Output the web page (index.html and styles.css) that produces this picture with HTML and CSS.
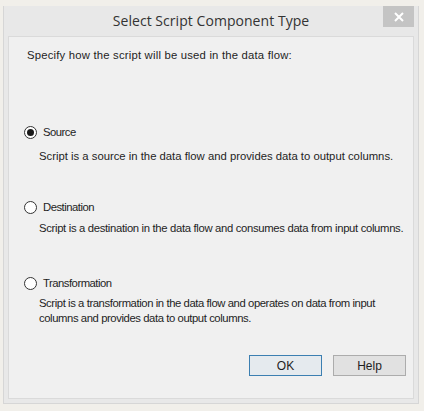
FILE: index.html
```html
<!DOCTYPE html>
<html>
<head>
<meta charset="utf-8">
<link rel="stylesheet" href="styles.css">
</head>
<body>
<div class="window">
  <div class="titlebar">
    <div class="title">Select Script Component Type</div>
    <div class="close"><svg width="10" height="10" viewBox="0 0 10 10"><path d="M1 1 L9 9 M9 1 L1 9" stroke="#fff" stroke-width="2"/></svg></div>
  </div>
  <div class="client">
    <div class="intro">Specify how the script will be used in the data flow:</div>
    <div class="option opt-source">
      <div class="radio-row"><span class="radio checked"></span><span class="label">Source</span></div>
      <div class="desc">Script is a source in the data flow and provides data to output columns.</div>
    </div>
    <div class="option opt-dest">
      <div class="radio-row"><span class="radio"></span><span class="label">Destination</span></div>
      <div class="desc">Script is a destination in the data flow and consumes data from input columns.</div>
    </div>
    <div class="option opt-trans">
      <div class="radio-row"><span class="radio"></span><span class="label">Transformation</span></div>
      <div class="desc">Script is a transformation in the data flow and operates on data from input<br>columns and provides data to output columns.</div>
    </div>
    <div class="buttons">
      <div class="btn btn-default">OK</div>
      <div class="btn">Help</div>
    </div>
  </div>
</div>
</body>
</html>
```
FILE: styles.css
```css
html, body {
  margin: 0;
  padding: 0;
}
body {
  background: #f1efea;
  width: 424px;
  height: 411px;
  overflow: hidden;
  font-family: "Liberation Sans", Arial, sans-serif;
  color: #1e1e1e;
}
.window {
  margin: 6px 0 0 3px;
  width: 416px;
  height: 398px;
  box-sizing: border-box;
  background: #e8e8e8;
  border: 1px solid #d6d6d6;
  border-top: none;
  display: flex;
  flex-direction: column;
  padding: 0 4px 4px 4px;
}
.titlebar {
  height: 30px;
  position: relative;
  display: flex;
  align-items: center;
  justify-content: center;
}
.title {
  font-family: "Open Sans", "Liberation Sans", sans-serif;
  font-size: 14px;
  color: #333;
  letter-spacing: 0.05px;
  margin-top: -2px;
}
.close {
  position: absolute;
  top: 0;
  right: 0;
  width: 31px;
  height: 21px;
  background: #c4c4c4;
  display: flex;
  align-items: center;
  justify-content: center;
}
.client {
  flex: 1;
  background: #f0f0f0;
  border: 1px solid #dadada;
  display: flex;
  flex-direction: column;
  font-size: 11.3px;
  white-space: nowrap;
}
.intro {
  margin: 11px 0 0 18px;
  line-height: 14px;
  letter-spacing: 0.2px;
}
.option {
  display: flex;
  flex-direction: column;
}
.opt-source { margin-top: 63px; }
.opt-dest { margin-top: 36px; }
.opt-trans { margin-top: 40px; }
.radio-row {
  display: flex;
  align-items: center;
  margin-left: 15px;
  height: 14px;
}
.radio {
  width: 13px;
  height: 13px;
  box-sizing: border-box;
  border: 1px solid #333;
  border-radius: 50%;
  background: #fff;
  display: flex;
  align-items: center;
  justify-content: center;
}
.radio.checked::after {
  content: "";
  width: 7px;
  height: 7px;
  border-radius: 50%;
  background: #1a1a1a;
}
.label {
  margin-left: 6px;
  line-height: 14px;
  letter-spacing: -0.5px;
}
.desc {
  margin: 10px 0 0 30px;
  line-height: 15px;
}
.opt-dest .desc { margin-top: 7px; letter-spacing: -0.33px; }
.opt-trans .desc { margin-top: 6px; letter-spacing: -0.42px; }
.buttons {
  display: flex;
  justify-content: flex-end;
  gap: 11px;
  margin: 29px 7px 0 0;
}
.btn {
  width: 73px;
  height: 21px;
  box-sizing: border-box;
  border: 1px solid #acacac;
  background: #e1e1e1;
  display: flex;
  align-items: center;
  justify-content: center;
  font-size: 12px;
}
.btn-default {
  border-color: #3c7fb1;
  background: #e5eaee;
}
```
